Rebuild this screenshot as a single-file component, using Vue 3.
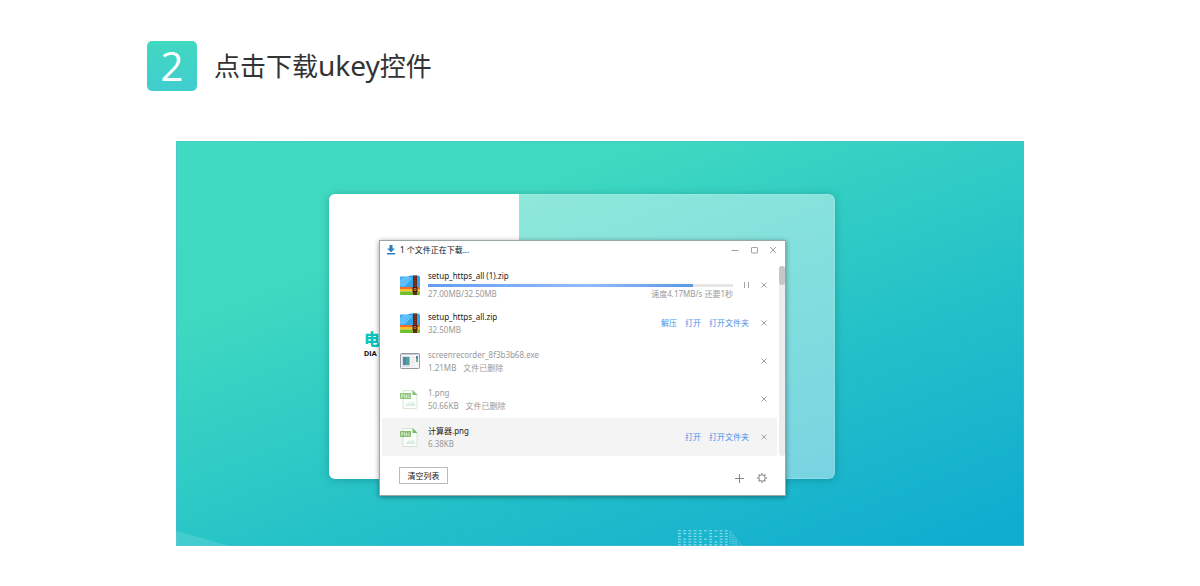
<script setup>
const files = [
  { id: 1, name: 'setup_https_all (1).zip', meta: '27.00MB/32.50MB', icon: 'zip', progress: 87, speed: '速度4.17MB/s 还要1秒', actions: [] },
  { id: 2, name: 'setup_https_all.zip', meta: '32.50MB', icon: 'zip', actions: ['解压', '打开', '打开文件夹'] },
  { id: 3, name: 'screenrecorder_8f3b3b68.exe', meta: '1.21MB', note: '文件已删除', icon: 'exe', removed: true, actions: [] },
  { id: 4, name: '1.png', meta: '50.66KB', note: '文件已删除', icon: 'png', removed: true, actions: [] },
  { id: 5, name: '计算器.png', meta: '6.38KB', icon: 'png', active: true, actions: ['打开', '打开文件夹'] },
]
const dotRows = ['1111111111', '1111101011', '1011101111', '1111111011', '1111101111', '1111111111']
const teeth = [0, 45, 90, 135, 180, 225, 270, 315]
</script>

<template>
  <main class="page">
    <h1 class="step"><span class="num">2</span><span>点击下载<span class="latin">ukey</span>控件</span></h1>

    <section class="stage">
      <svg class="corner" viewBox="0 0 54 15" aria-hidden="true"><path d="M0 0 54 15H0z" fill="#fff" fill-opacity=".13" /></svg>
      <svg class="dots" viewBox="0 0 66 16" aria-hidden="true">
        <g fill="#a5e2f0" fill-opacity=".8">
          <template v-for="(row, r) in dotRows" :key="r">
            <template v-for="(on, c) in row.split('')" :key="c">
              <rect v-if="on === '1'" :x="c * 5.2 + 1" :y="r * 2.8 + 0.2" width="2.9" height="1.2" />
            </template>
          </template>
        </g>
        <path d="M53 1 65 16M53 4l9 12M53 7l7 9M53 10l4 6M53 1v15M56 5v11M59 9v7" stroke="#a5e2f0" stroke-opacity=".5" stroke-dasharray="1.2 .8" fill="none" />
      </svg>

      <div class="card">
        <div class="card-left">
          <div class="brand"><span class="brand-cn">电</span><span>DIA</span></div>
        </div>
        <div class="card-right"></div>
      </div>

      <div class="dialog" role="dialog" aria-labelledby="dialog-title">
        <header class="bar">
          <svg class="dl" viewBox="0 0 10 10" aria-hidden="true"><path d="M3.500 0h3v3.500H9L5 7.300 1 3.500h2.500zM1 8h8v1.600H1z" fill="#2a7fc4" /></svg>
          <h2 id="dialog-title">1 个文件正在下载...</h2>
          <div class="win">
            <button type="button" aria-label="最小化"><svg viewBox="0 0 8 8"><path d="M.5 4.500h7" /></svg></button>
            <button type="button" aria-label="最大化"><svg viewBox="0 0 8 8"><rect x="1.500" y="1.500" width="6" height="5.500" rx=".5" /></svg></button>
            <button type="button" aria-label="关闭"><svg viewBox="0 0 8 8"><path d="M1 1l6 6M7 1L1 7" /></svg></button>
          </div>
        </header>

        <div class="body">
          <ul class="list">
            <li v-for="f in files" :key="f.id" class="row" :class="{ removed: f.removed, active: f.active }">
              <svg v-if="f.icon === 'zip'" class="icon" viewBox="0 0 22 22" aria-hidden="true">
                <path d="M1 3.500q0-1 1-1h7l2-1h8q2 0 2 2V14H1z" fill="#35a5ec" />
                <path d="M1 12V6L4 3h8L4 13z" fill="#5fbff8" />
                <path d="M5 12 12 4h1L6 12z" fill="#8fd6fe" />
                <path d="M1 13h20v2H1z" fill="#f26b2b" />
                <path d="M1 15h20v2.500H1z" fill="#fcc026" />
                <path d="M1 17.500h20V20q0 1-1 1H2q-1 0-1-1z" fill="#6fbf2b" />
                <path d="M14 1.500h4V21h-4z" fill="#6b2613" />
                <path d="M16 2v11" stroke="#a5522e" stroke-dasharray="1 1" />
                <path d="M13.500 13h5v5h-5z" fill="#43180e" />
                <path d="M15 14.500h2v2h-2z" fill="none" stroke="#d89a4c" stroke-width=".7" />
              </svg>
              <svg v-else-if="f.icon === 'exe'" class="icon" viewBox="0 0 22 22" aria-hidden="true">
                <rect x="1.500" y="3.500" width="19" height="15" rx="1" fill="#f4f5f7" stroke="#8a8f99" />
                <path d="M2 4h18v1H2z" fill="#c4c8cf" />
                <path d="M3 6h8v11H3z" fill="#d7dde2" />
                <path d="M4 7h6.500v8H4z" fill="#3c9a8d" />
                <path d="M4 7h3v8H4z" fill="#4479a5" />
                <path d="M12.500 7.500h3M12.500 10h3M12.500 12.500h3M12.500 15h3" stroke="#dadde1" />
                <path d="M17 6h2v3h-2z" fill="#3d79b5" />
                <path d="M17 9h2v3h-2z" fill="#67b177" />
              </svg>
              <svg v-else class="icon" viewBox="0 0 22 22" aria-hidden="true">
                <path d="M4 2.500h10l4 4V20q0 .5-.5.500h-13Q4 20.500 4 20z" fill="#fcfefb" stroke="#d3e4cf" />
                <path d="M13.500 2v5h5z" fill="#77ba69" />
                <path d="M6.500 18 9.500 14l2 2 2-3 3.500 5z" fill="#d6ede4" />
                <rect x="1" y="5" width="11" height="6" fill="#86bf72" />
                <path d="M2.500 10V6.500h1.500v2H2.500M5.500 10V6.500l2 3.500V6.500M10.700 7H9v2.500h1.700V8.500" fill="none" stroke="#e9f5e4" stroke-width=".6" />
              </svg>

              <div class="info">
                <div class="name">{{ f.name }}</div>
                <div v-if="f.progress" class="track" role="progressbar" :aria-valuenow="f.progress" aria-label="下载进度">
                  <div class="fill" :style="{ width: f.progress + '%' }"></div>
                </div>
                <div class="meta">
                  <span>{{ f.meta }}</span><span v-if="f.note" class="note">{{ f.note }}</span>
                  <span v-if="f.speed" class="speed">{{ f.speed }}</span>
                </div>
              </div>
              <div v-if="f.actions.length" class="actions">
                <a v-for="a in f.actions" :key="a" href="#">{{ a }}</a>
              </div>
              <button v-if="f.progress" type="button" class="pause" aria-label="暂停"><svg viewBox="0 0 8 8"><path d="M2.500 1v6M6.500 1v6" /></svg></button>
              <button type="button" class="remove" aria-label="移除"><svg viewBox="0 0 8 8"><path d="M1.500 1.500l5 5M6.500 1.500l-5 5" /></svg></button>
            </li>
          </ul>
          <div class="scroll"><div class="thumb"></div></div>
        </div>

        <footer class="foot">
          <button type="button" class="clear">清空列表</button>
          <div class="tools">
            <button type="button" aria-label="新建"><svg viewBox="0 0 10 10"><path d="M5.500 1v9M1 5.500h9" /></svg></button>
            <button type="button" aria-label="设置">
              <svg viewBox="0 0 10 10">
                <circle cx="5" cy="5" r="3.200" />
                <path v-for="t in teeth" :key="t" d="M5 1.500V.2" stroke-width="1.500" :transform="`rotate(${t} 5 5)`" />
              </svg>
            </button>
          </div>
        </footer>
      </div>
    </section>
  </main>
</template>

<style>
body { margin: 0; background: #fff; }
</style>

<style scoped>
.page {
  max-width: 906px;
  margin: 0 auto;
  padding: 41px 0 40px;
  font-family: "Noto Sans", "Noto Sans CJK SC", sans-serif;
  color: #333;
}
.step {
  display: flex;
  align-items: center;
  gap: 17px;
  margin: 0 0 50px;
  font-size: 26px;
  font-weight: 400;
  line-height: 50px;
}
.latin { font-size: 28px; line-height: 1; }
.num {
  width: 50px;
  height: 50px;
  border-radius: 5px;
  background: linear-gradient(180deg, #40d8c0, #41cdcf);
  color: #fff;
  font-family: "Open Sans", "Noto Sans", sans-serif;
  font-weight: 400;
  font-size: 40px;
  text-align: center;
}
.stage {
  position: relative;
  margin: 0 29px;
  padding: 53px 0 67px;
  background: linear-gradient(159deg, #40dac0 0%, #3fd9c0 25%, #25c2c8 61%, #10acd0 97%);
  box-shadow: inset 0 0 0 1px rgba(80, 185, 225, .45);
}
.corner { position: absolute; left: 0; bottom: 0; width: 54px; height: 15px; }
.dots { position: absolute; right: 281px; bottom: 0; width: 66px; height: 16px; }
.card {
  display: flex;
  width: 60%;
  max-width: 506px;
  height: 285px;
  margin-left: 153px;
  border-radius: 6px;
  overflow: hidden;
  box-shadow: 0 1px 8px rgba(0, 70, 80, .3);
}
.card-left { flex: 0 0 190px; background: #fff; }
.card-right {
  flex: 1;
  background: rgba(255, 255, 255, .41);
  border: 1px solid rgba(255, 255, 255, .15);
  border-left: 0;
  border-radius: 0 6px 6px 0;
}
.brand {
  display: flex;
  flex-direction: column;
  width: 16px;
  margin: 133px 0 0 35px;
  color: #111;
  font: 700 8px/10px Roboto, sans-serif;
}
.brand-cn {
  color: #0bc5bd;
  font: 900 16px/22px "Noto Sans CJK SC", sans-serif;
}

.dialog {
  position: absolute;
  top: 99px;
  left: 203px;
  box-sizing: border-box;
  width: 407px;
  border: 1px solid #9aa6a6;
  background: #fff;
  box-shadow: 0 1px 5px rgba(0, 0, 0, .4);
  font-size: 8px;
  line-height: 12px;
}
button {
  display: flex;
  align-items: center;
  justify-content: center;
  padding: 0;
  border: 0;
  background: none;
  font: inherit;
  color: inherit;
}
button svg { width: 8px; height: 8px; fill: none; stroke: #a3a3a3; stroke-width: 1; }
.bar {
  display: flex;
  align-items: center;
  height: 18px;
  margin-bottom: 7px;
  padding: 0 8px 0 6px;
}
.dl { width: 10px; height: 10px; margin-right: 4px; }
h2 { margin: 0; font-size: 8px; font-weight: 400; color: #111; }
.win { display: flex; gap: 11px; margin-left: auto; }
.body { display: flex; gap: 2px; padding-left: 2px; }
.list { flex: 1; margin: 0; padding: 0; list-style: none; }
.row {
  display: flex;
  align-items: center;
  height: 38px;
  padding: 0 9px 0 17px;
}
.row.active { background: #f4f4f4; }
.icon { width: 22px; height: 22px; margin-right: 7px; }
.info { flex: 1; }
.name { color: #222; }
.removed .name, .meta { color: #999; }
.removed .icon { opacity: .9; }
.meta { display: flex; line-height: 13px; }
.note { margin-left: 7px; }
.speed { margin-left: auto; }
.track { height: 3px; margin: 2px 0 0; background: #e6e6e6; }
.fill { height: 100%; background: linear-gradient(90deg, #639df0, #8fbcfb 60%, #5a98e2); }
.actions { display: flex; gap: 8px; margin-right: 11px; }
.actions a { color: #4a90e8; text-decoration: none; }
.pause { margin: 0 10px 0 9px; }
.scroll { width: 6px; border-radius: 3px; background: #ececec; }
.thumb { height: 19px; border-radius: 3px; background: #c6c6c6; }
.foot {
  display: flex;
  align-items: center;
  justify-content: space-between;
  height: 39px;
  padding: 0 18px 0 19px;
}
.clear {
  width: 49px;
  height: 17px;
  border: 1px solid #bbb;
  background: #fff;
  color: #222;
}
.tools { display: flex; gap: 13px; padding-top: 4px; }
.tools svg { width: 10px; height: 10px; stroke: #888; }
</style>
